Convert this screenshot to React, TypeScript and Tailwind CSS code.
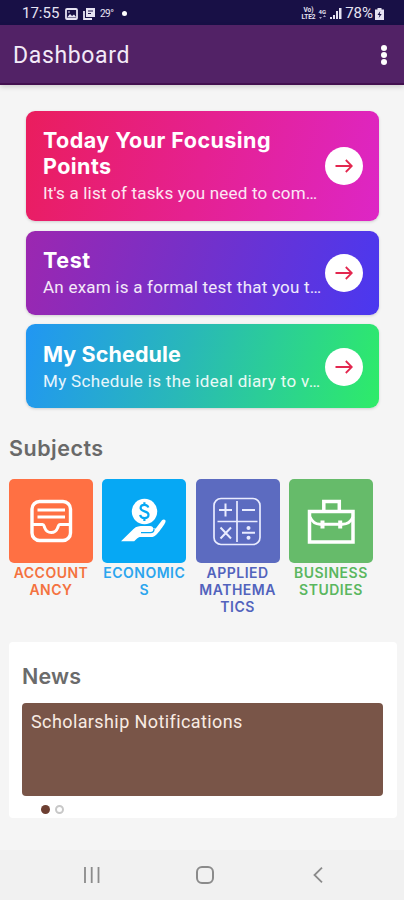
import React from "react";

interface FocusCard {
  title: string;
  text: string;
  className: string;
  titleClass: string;
  textClass: string;
}

interface Subject {
  lines: string[];
  tile: string;
  label: string;
  icon: React.ReactNode;
}

const cards: FocusCard[] = [
  {
    title: "Today Your Focusing Points",
    text: "It's a list of tasks you need to com…",
    className: "h-[110px] bg-linear-[105deg,#ea1d5d_0%,#e52191_50%,#dd26c6_100%]",
    titleClass: "tracking-[0.45px]",
    textClass: "tracking-[0.19px]",
  },
  {
    title: "Test",
    text: "An exam is a formal test that you t…",
    className: "mt-[10px] h-[84px] bg-linear-[105deg,#9c27b0_0%,#7630c8_45%,#4a38f0_100%]",
    titleClass: "tracking-[0.6px]",
    textClass: "tracking-[0.23px]",
  },
  {
    title: "My Schedule",
    text: "My Schedule is the ideal diary to v…",
    className: "mt-[9px] h-[84px] pt-[2px] bg-linear-[105deg,#2196f3_0%,#29b8b8_45%,#2eec68_100%]",
    titleClass: "tracking-[0.1px]",
    textClass: "tracking-[0.33px]",
  },
];

const TrayIcon = () => (
  <svg className="h-[84px] w-[84px]" viewBox="0 0 84 84" fill="none" stroke="white" strokeWidth="3.4">
    <rect x="23" y="22.5" width="38.5" height="39" rx="7.5" />
    <path d="M28.5 31h27.5M28.5 38h27.5" strokeWidth="2.8" />
    <path d="M23 45.500h10.500c1.500 0 1.500 1.500 2.200 3.200 1.200 3 3.500 4.800 6.500 4.800s5.300-1.800 6.500-4.800c.7-1.700.7-3.200 2.200-3.200h10.600" strokeWidth="3" />
  </svg>
);

const HandCoinIcon = () => (
  <svg className="h-[84px] w-[84px]" viewBox="0 0 84 84">
    <circle cx="42.5" cy="32.5" r="12.7" fill="white" />
    <path
      d="M46.300 28.600c-.4-1.900-1.900-2.700-3.900-2.700-2.300 0-3.800 1.300-3.800 3.200 0 4.200 7.900 2.300 7.900 6.700 0 2-1.700 3.300-4 3.300-2.400 0-4-1.100-4.300-3.200M42.400 23.200v3M42.400 39v3"
      fill="none"
      stroke="#06a8f4"
      strokeWidth="2.2"
    />
    <path
      d="M19 62.300 31.500 50c2.800-2.800 6-3 10-3h6.500c2 0 3.200 1 3.200 2.600h2.500l6.300-8.300c1.200-1.500 4.200-1 3.500 1.600-.5 1.700-5.500 8.800-8.700 12.300-2 2.200-3.500 2.800-6.500 2.800H39c-2 0-3 .5-4.200 1.700l-2.600 2.600z"
      fill="white"
    />
    <path d="M39 53.700h9.500c2.300 0 3.500-1.500 3.500-3.700" fill="none" stroke="#06a8f4" strokeWidth="1.3" />
  </svg>
);

const MathIcon = () => (
  <svg className="h-[84px] w-[84px]" viewBox="0 0 84 84" fill="none" stroke="#e9ecff" strokeWidth="1.7">
    <rect x="18" y="19.500" width="46" height="46" rx="7" />
    <path d="M41 22v41M21.500 42.500h40" />
    <path d="M23 31h13M29.500 24.500v13M46 31h13M24.500 48.500l10.500 11M35 48.500l-10.500 11M46 53.800h13" strokeWidth="2" />
    <circle cx="52.5" cy="49" r="2" fill="#e9ecff" stroke="none" />
    <circle cx="52.5" cy="58.8" r="2" fill="#e9ecff" stroke="none" />
  </svg>
);

const BriefcaseIcon = () => (
  <svg className="h-[84px] w-[84px]" viewBox="0 0 84 84" fill="none" stroke="white" strokeWidth="3.5">
    <rect x="20.5" y="32.500" width="43.500" height="30.500" />
    <path d="M34.800 32V22.500h15.500V32" />
    <path d="M21 38c2 4.500 5.500 7.200 10 7.200h22.500c4.500 0 8.500-2.700 10.500-7.200" strokeWidth="3" />
    <path d="M33.500 41.500v8M51.200 41.500v8" strokeWidth="4" />
  </svg>
);

const subjects: Subject[] = [
  { lines: ["ACCOUNT", "ANCY"], tile: "bg-[#ff7043]", label: "text-[#f4723f]", icon: <TrayIcon /> },
  { lines: ["ECONOMIC", "S"], tile: "bg-[#06a8f4]", label: "text-[#2ba5ee]", icon: <HandCoinIcon /> },
  { lines: ["APPLIED", "MATHEMA", "TICS"], tile: "bg-[#5c6bc0]", label: "text-[#5263bd]", icon: <MathIcon /> },
  { lines: ["BUSINESS", "STUDIES"], tile: "bg-[#66bb6a]", label: "text-[#5ab75f]", icon: <BriefcaseIcon /> },
];

const StatusBar = () => (
  <div className="flex h-[25px] items-center bg-[#181046] pt-[2px] pr-[20px] pl-[22px] text-[#e6e3f2]">
    <span className="w-[43px] font-[Roboto] text-[15px] leading-none whitespace-nowrap">17:55</span>
    <svg className="h-[12px] w-[13px]" viewBox="0 0 13 12">
      <rect x="1" y="1" width="11" height="10" rx="1" fill="none" stroke="currentColor" strokeWidth="1.8" />
      <path d="m2 9.500 3-3.500 2 2 2-1.500 2.500 3z" fill="currentColor" />
      <circle cx="4" cy="4" r=".8" fill="currentColor" />
    </svg>
    <svg className="ml-[5px] h-[12px] w-[12px]" viewBox="0 0 12 12">
      <path d="M3 0h9v9H3z" fill="currentColor" />
      <path d="M1 3v8h8" fill="none" stroke="currentColor" strokeWidth="1.8" />
      <path d="M5 3h5M5 5.500h3" stroke="#181046" />
    </svg>
    <span className="ml-[5px] font-[Roboto] text-[10px] leading-none tracking-[-0.5px]">29°</span>
    <span className="ml-[9px] h-[5px] w-[5px] rounded-full bg-white" />
    <div className="ml-auto flex items-center">
      <span className="flex flex-col items-center font-[Roboto] text-[6.5px] leading-[8px] font-bold">
        <span className="h-[6px] leading-[6px]">Vo)</span>
        <span className="mt-[1px] h-[6px] leading-[6px]">LTE2</span>
      </span>
      <span className="ml-[3px] flex flex-col items-center font-[Roboto] text-[6px] font-bold">
        <span className="leading-[7px]">4G</span>
        <svg className="h-[4px] w-[7px] opacity-70" viewBox="0 0 7 4" fill="currentColor">
          <path d="M0 2h3L1.500 4zM4 2h3L5.500 0z" />
        </svg>
      </span>
      <svg className="ml-[4px] h-[11px] w-[12px]" viewBox="0 0 12 11" fill="currentColor">
        <path d="M0 9h2v2H0zM3 7h2v4H3zM6 3h2v8H6zM9 0h2.500v11H9z" />
      </svg>
      <span className="ml-[3px] font-[Roboto] text-[15px] leading-none">78%</span>
      <svg className="ml-[2px] h-[12px] w-[9px]" viewBox="0 0 9 12">
        <path d="M2.500 0h4v1.500H9V12H0V1.500h2.500z" fill="currentColor" />
        <path d="M5.300 3 2.500 7h2l-.8 3 3-4h-2z" fill="#181046" />
      </svg>
    </div>
  </div>
);

const AppBar = () => (
  <header className="flex h-[60px] items-center justify-between border-b-2 border-[#42104f] bg-[#522266] pt-[2px] pr-[17px] pl-[13px] shadow-[0_2px_5px_rgba(0,0,0,0.16)]">
    <h1 className="font-['Roboto'] text-[23px] leading-none tracking-[0.65px] text-[#f3eaf8]">Dashboard</h1>
    <button className="flex flex-col gap-[1px]" aria-label="More options">
      <span className="h-[6px] w-[6px] rounded-full bg-white" />
      <span className="h-[6px] w-[6px] rounded-full bg-white" />
      <span className="h-[6px] w-[6px] rounded-full bg-white" />
    </button>
  </header>
);

const NavBar = () => (
  <nav className="flex h-[50px] items-center bg-[#f1f1f1] pb-[1px] pl-[84px] text-[#8b8b8b]">
    <svg className="h-4 w-4" viewBox="0 0 16 16" stroke="currentColor" strokeWidth="1.8">
      <path d="M1 0v16M7.700 0v16M14.500 0v16" />
    </svg>
    <svg className="ml-[96px] h-[18px] w-[18px]" viewBox="0 0 18 18" fill="none" stroke="currentColor" strokeWidth="2">
      <rect x="1" y="1" width="16" height="16" rx="5" />
    </svg>
    <svg className="ml-[99px] h-4 w-[10px]" viewBox="0 0 10 16" fill="none" stroke="currentColor" strokeWidth="1.8">
      <path d="M9 .7 1.500 8 9 15.300" />
    </svg>
  </nav>
);

export default function App() {
  return (
    <div className="flex h-[900px] w-[404px] flex-col overflow-hidden bg-[#f5f5f5] font-['Inter',sans-serif]">
      <StatusBar />
      <AppBar />

      <main className="flex flex-1 flex-col">
        {/* Focus cards */}
        <section className="mt-[26px] ml-[26px] w-[353px]">
          {cards.map((card) => (
            <div
              key={card.title}
              className={`flex items-center rounded-[9px] pl-[17px] shadow-[0_1px_3px_rgba(0,0,0,0.16)] ${card.className}`}
            >
              <div className="w-[282px] text-white">
                <h2 className={`w-[260px] text-[21.5px] leading-[26px] font-bold ${card.titleClass}`}>{card.title}</h2>
                <p className={`mt-[1px] font-['Roboto'] text-[17px] leading-[26px] whitespace-nowrap text-white/90 ${card.textClass}`}>
                  {card.text}
                </p>
              </div>
              <span className="flex h-[38px] w-[38px] shrink-0 items-center justify-center rounded-full bg-white">
                <svg className="h-[14px] w-[18px]" viewBox="0 0 18 14" fill="none" stroke="#e3274f" strokeWidth="1.8">
                  <path d="M.5 7h16M10.800 1l6 6-6 6" />
                </svg>
              </span>
            </div>
          ))}
        </section>

        {/* Subjects */}
        <h2 className="mt-[26px] ml-[9px] text-[21.5px] leading-[28px] font-semibold tracking-[0.5px] text-[#696969]">
          Subjects
        </h2>
        <section className="mt-[17px] ml-[9px] flex h-[163px] gap-[9.3px]">
          {subjects.map((subject) => (
            <div key={subject.lines[0]} className="w-[84px]">
              <div className={`h-[84px] rounded-[5px] ${subject.tile}`}>{subject.icon}</div>
              <div className={`mt-[1px] text-center text-[14px] leading-[17px] font-semibold tracking-[0.5px] ${subject.label}`}>
                {subject.lines.map((line) => (
                  <div key={line}>{line}</div>
                ))}
              </div>
            </div>
          ))}
        </section>

        {/* News */}
        <section className="ml-[9px] h-[176px] w-[388px] rounded-[4px] bg-white px-[13px] pt-[20px]">
          <h2 className="text-[21.5px] leading-[28px] font-semibold tracking-[0.2px] text-[#6b6b6b]">News</h2>
          <div className="mt-[13px] h-[93px] w-[361px] rounded-[4px] bg-[#795548] px-[9px] pt-[7px]">
            <p className="font-['Roboto'] text-[18px] leading-[24px] tracking-[0.4px] whitespace-nowrap text-[#f8ebe3]">
              Scholarship Notifications
            </p>
          </div>
          <div className="mt-[9px] ml-[19px] flex gap-[5px]">
            <span className="h-[9px] w-[9px] rounded-full bg-[#6d3f32]" />
            <span className="h-[9px] w-[9px] rounded-full border-2 border-[#c8c8c8]" />
          </div>
        </section>
      </main>

      <NavBar />
    </div>
  );
}
